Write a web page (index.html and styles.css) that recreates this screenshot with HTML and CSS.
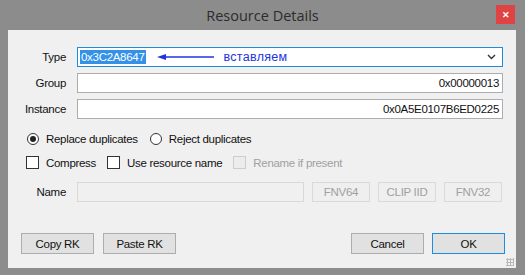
FILE: index.html
```html
<!DOCTYPE html>
<html lang="en">
<head>
    <meta charset="UTF-8">
    <title>Resource Details</title>
    <link rel="stylesheet" href="styles.css">
</head>
<body>
    <div class="window">
        <div class="titlebar">
            <span class="title">Resource Details</span>
            <span class="close">&#x2715;</span>
        </div>

        <div class="client">
            <div class="fields">
                <label class="lbl">Type</label>
                <div class="combo">
                    <span class="sel">0x3C2A8647</span>
                    <svg class="note-arrow" width="58" height="8" viewBox="0 0 58 8">
                        <line x1="4" y1="4" x2="57" y2="4" stroke="#2233dd" stroke-width="1.3"/>
                        <polygon points="0,4 9,1 9,7" fill="#2233dd"/>
                    </svg>
                    <span class="note">вставляем</span>
                    <svg class="chev" width="9" height="6" viewBox="0 0 9 6">
                        <polyline points="1,1 4.5,4.5 8,1" fill="none" stroke="#333" stroke-width="1.4"/>
                    </svg>
                </div>

                <label class="lbl">Group</label>
                <div class="box num">0x00000013</div>

                <label class="lbl">Instance</label>
                <div class="box num">0x0A5E0107B6ED0225</div>
            </div>

            <div class="opts radios">
                <span class="opt"><span class="radio on"></span>Replace duplicates</span>
                <span class="opt"><span class="radio"></span>Reject duplicates</span>
            </div>

            <div class="opts checks">
                <span class="opt"><span class="check"></span>Compress</span>
                <span class="opt"><span class="check"></span>Use resource name</span>
                <span class="opt off"><span class="check"></span>Rename if present</span>
            </div>

            <div class="name-row">
                <label class="lbl">Name</label>
                <div class="box name-box"></div>
                <span class="btn dis">FNV64</span>
                <span class="btn dis">CLIP IID</span>
                <span class="btn dis">FNV32</span>
            </div>

            <div class="footer">
                <span class="btn">Copy RK</span>
                <span class="btn">Paste RK</span>
                <span class="spacer"></span>
                <span class="btn">Cancel</span>
                <span class="btn default">OK</span>
            </div>

            <div class="grip"></div>
        </div>
    </div>
</body>
</html>
```

FILE: styles.css
```css
body {
    margin: 0;
    width: 525px;
    height: 275px;
    overflow: hidden;
    background: #8c8c8c;
    font-family: 'Liberation Sans', Arial, sans-serif;
    font-size: 11.5px;
    letter-spacing: -0.3px;
    color: #000;
}

.window {
    height: 275px;
    display: flex;
    flex-direction: column;
}

.titlebar {
    height: 30px;
    position: relative;
    display: flex;
    align-items: center;
    justify-content: center;
}

.title {
    font-family: 'Open Sans', sans-serif;
    font-size: 14.5px;
    letter-spacing: 0;
    color: #2b2b2b;
}

.close {
    position: absolute;
    right: 10px;
    top: 5px;
    width: 19px;
    height: 19px;
    background: #e04343;
    color: #fff;
    font-size: 9px;
    font-weight: bold;
    display: flex;
    align-items: center;
    justify-content: center;
}

.client {
    position: relative;
    margin: 0 9px 0 8px;
    height: 238px;
    background: #f0f0f0;
    box-sizing: border-box;
    padding: 17px 13px 0 0;
    display: flex;
    flex-direction: column;
}

.fields {
    display: grid;
    grid-template-columns: 58px 1fr;
    column-gap: 11px;
    row-gap: 6px;
}

.lbl {
    text-align: right;
    align-self: center;
    color: #111;
}

.box, .combo {
    height: 20px;
    box-sizing: border-box;
    background: #fff;
    border: 1px solid #adadad;
    display: flex;
    align-items: center;
    padding: 0 3px;
}

.num {
    justify-content: flex-end;
    color: #111;
}

.combo {
    position: relative;
    border-color: #1c8ee0;
    color: #2233dd;
    padding-left: 2px;
}

.sel {
    background: #3391e8;
    color: #fff;
    padding: 0 1px;
    line-height: 14px;
}

.note-arrow {
    margin-left: 11px;
}

.note {
    margin-left: 9px;
    font-size: 12.5px;
    letter-spacing: 0.3px;
}

.chev {
    margin-left: auto;
    margin-right: 3px;
}

.opts {
    display: flex;
    align-items: center;
    color: #111;
}

.radios {
    margin-top: 14px;
    gap: 12px;
    padding-left: 19px;
}

.checks {
    margin-top: 11px;
    gap: 11px;
    padding-left: 18px;
}

.opt {
    display: flex;
    align-items: center;
    gap: 7px;
}

.radio {
    width: 12px;
    height: 12px;
    box-sizing: border-box;
    border: 1px solid #333;
    border-radius: 50%;
    background: #fff;
    display: flex;
    align-items: center;
    justify-content: center;
}

.radio.on::after {
    content: '';
    width: 6px;
    height: 6px;
    border-radius: 50%;
    background: #222;
}

.check {
    width: 13px;
    height: 13px;
    box-sizing: border-box;
    border: 1px solid #333;
    background: #fff;
}

.off {
    color: #a0a0a0;
}

.off .check {
    border-color: #cdcdcd;
    background: #ececec;
}

.name-row {
    margin-top: 13px;
    display: flex;
    align-items: center;
    gap: 8px;
}

.name-row .lbl {
    flex-shrink: 0;
    width: 58px;
    margin-right: 3px;
}

.name-box {
    flex-shrink: 0;
    width: 227px;
    background: #f0f0f0;
    border-color: #d9d9d9;
}

.btn {
    flex-shrink: 0;
    height: 21px;
    box-sizing: border-box;
    width: 73px;
    border: 1px solid #adadad;
    background: #e1e1e1;
    display: flex;
    align-items: center;
    justify-content: center;
    color: #111;
}

.name-row .btn {
    width: 58px;
    height: 20px;
}

.btn.dis {
    background: #efefef;
    border-color: #d9d9d9;
    color: #a0a0a0;
}

.footer {
    margin-top: 31px;
    margin-right: -2px;
    display: flex;
    padding-left: 13px;
    gap: 8px;
}

.footer .btn:nth-child(2) {
    margin-left: 1px;
}

.spacer {
    flex: 1;
}

.btn.default {
    border-color: #1c8ee0;
}

.grip {
    position: absolute;
    right: 2px;
    bottom: 2px;
    width: 8px;
    height: 8px;
    background-image: radial-gradient(circle, #b8b8b8 1px, transparent 1.2px);
    background-size: 3px 3px;
}
```
